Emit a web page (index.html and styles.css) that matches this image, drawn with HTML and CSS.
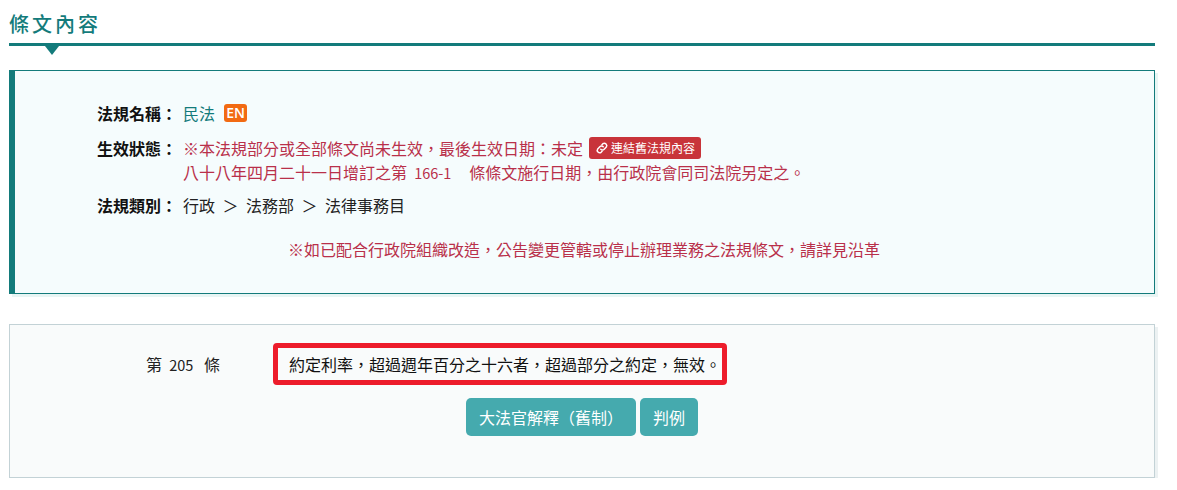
FILE: index.html
```html
<!DOCTYPE html>
<html lang="zh-Hant">
  <head>
    <meta charset="UTF-8" />
    <meta name="viewport" content="width=device-width, initial-scale=1.0" />
    <title>條文內容</title>
    <link rel="stylesheet" href="styles.css">
  </head>
  <body>
    <div class="container">
      <div class="section-title">
        <h2>條文內容</h2>
      </div>

      <div class="law-info">
        <div class="info-row name-row">
          <span class="info-label">法規名稱：</span>
          <div class="info-value">
            <a class="law-link" href="#">民法</a>
            <a class="en-badge" href="#">EN</a>
          </div>
        </div>
        <div class="info-row status-row">
          <span class="info-label">生效狀態：</span>
          <div class="info-value red">
            <div class="status-line">
              <span>※本法規部分或全部條文尚未生效，最後生效日期：未定</span>
              <a class="old-link" href="#">
                <svg class="link-icon" viewBox="0 0 16 16" fill="none" stroke="currentColor" stroke-width="1.7" stroke-linecap="round">
                  <path d="M6.6 9.4a2.7 2.7 0 0 0 3.9 0l2.4-2.4a2.8 2.8 0 0 0-3.9-3.9L7.9 4.2" />
                  <path d="M9.4 6.6a2.7 2.7 0 0 0-3.9 0L3.1 9a2.8 2.8 0 0 0 3.9 3.9l1.1-1.1" />
                </svg>
                連結舊法規內容
              </a>
            </div>
            <div class="status-note">八十八年四月二十一日增訂之第&nbsp;&nbsp;<span class="num">166-1</span>&nbsp;&nbsp;&nbsp;&nbsp;&nbsp;條條文施行日期，由行政院會同司法院另定之。</div>
          </div>
        </div>
        <div class="info-row type-row">
          <span class="info-label">法規類別：</span>
          <div class="info-value type-path">行政<span class="sep">＞</span>法務部<span class="sep">＞</span>法律事務目</div>
        </div>
        <p class="notice">※如已配合行政院組織改造，公告變更管轄或停止辦理業務之法規條文，請詳見沿革</p>
      </div>

      <div class="article">
        <div class="article-row">
          <div class="article-no">第&nbsp;&nbsp;<span class="num">205</span>&nbsp;&nbsp;&nbsp;條</div>
          <div class="article-text">約定利率，超過週年百分之十六者，超過部分之約定，無效。</div>
        </div>
        <div class="article-btns">
          <a class="btn" href="#">大法官解釋（舊制）</a>
          <a class="btn" href="#">判例</a>
        </div>
      </div>
    </div>
  </body>
</html>
```

FILE: styles.css
```css
* {
  box-sizing: border-box;
  margin: 0;
}
body {
  background-color: #fff;
  font-family: "Noto Sans CJK TC", "Liberation Sans", sans-serif;
  font-size: 16px;
  color: #222;
}
a {
  text-decoration: none;
}
.container {
  width: 1146px;
  margin-left: 9px;
}

.section-title {
  position: relative;
  height: 46px;
  border-bottom: 3px solid #137b7b;
}
.section-title h2 {
  padding-top: 9px;
  font-size: 20px;
  line-height: 30px;
  font-weight: 500;
  letter-spacing: 3px;
  color: #137b7b;
}
.section-title::after {
  content: "";
  position: absolute;
  left: 36px;
  top: 46px;
  border-style: solid;
  border-width: 9px 7.5px 0;
  border-color: #137b7b transparent transparent;
}

.law-info {
  height: 224px;
  margin-top: 24px;
  padding: 30px 0 0 82px;
  background-color: #f5fcfd;
  border: 1px solid #137b7b;
  border-left-width: 6px;
  box-shadow: 3px 3px 0 #e8f5f4;
}
.info-row {
  display: flex;
  line-height: 24px;
}
.status-row {
  margin-top: 11px;
}
.type-row {
  margin-top: 8px;
}
.info-label {
  width: 86px;
  flex-shrink: 0;
  font-weight: 700;
  color: #111;
}
.info-value {
  display: flex;
  flex-direction: column;
}
.name-row .info-value {
  flex-direction: row;
  align-items: center;
}
.type-path {
  display: block;
}
.sep {
  margin: 0 7.5px;
}
.num {
  font-size: 14.5px;
}
.law-link {
  color: #137b7b;
}
.en-badge {
  width: 23px;
  height: 18px;
  margin-left: 9px;
  background-color: #f26a12;
  border-radius: 3px;
  font-family: "Open Sans", sans-serif;
  font-size: 14px;
  font-weight: 600;
  line-height: 18px;
  text-align: center;
  color: #fff;
}
.red {
  color: #b9304a;
}
.status-line {
  display: flex;
  align-items: center;
}
.old-link {
  display: flex;
  align-items: center;
  gap: 2px;
  height: 22px;
  margin-left: 6px;
  padding: 0 6px;
  background-color: #c8343a;
  border-radius: 3px;
  font-size: 12px;
  line-height: 22px;
  color: #fff;
}
.link-icon {
  width: 14px;
  height: 14px;
}
.notice {
  margin: 20px 0 0 -1px;
  padding-right: 82px;
  line-height: 24px;
  text-align: center;
  color: #b9304a;
}

.article {
  height: 154px;
  margin-top: 30px;
  padding-top: 18px;
  background-color: #f9fbfb;
  border: 1px solid #c3d2d6;
  box-shadow: 3px 3px 0 #ecf1f2;
}
.article-row {
  display: flex;
  align-items: center;
}
.article-no {
  width: 263px;
  padding-left: 136px;
  white-space: nowrap;
}
.article-text {
  width: 454px;
  height: 42px;
  padding-left: 11px;
  border: 5px solid #ed1c2b;
  border-radius: 4px;
  line-height: 32px;
  white-space: nowrap;
  color: #111;
}
.article-btns {
  display: flex;
  justify-content: center;
  gap: 4px;
  margin-top: 13px;
}
.btn {
  height: 38px;
  padding: 0 13px;
  background-color: #45aaae;
  border-radius: 5px;
  line-height: 38px;
  font-size: 16px;
  color: #fff;
}
```
